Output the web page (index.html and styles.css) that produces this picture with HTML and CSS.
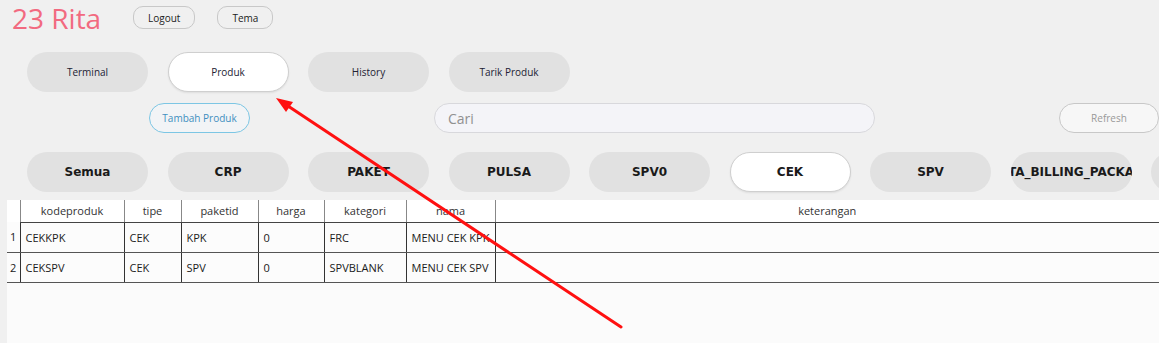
FILE: index.html
```html
<!DOCTYPE html>
<html lang="en">
<head>
    <meta charset="UTF-8">
    <title>23 Rita - Produk</title>
    <link rel="stylesheet" href="styles.css">
</head>
<body>
    <div class="app">
        <div class="topbar">
            <div class="brand">23 Rita</div>
            <button class="small-btn">Logout</button>
            <button class="small-btn">Tema</button>
        </div>

        <div class="tabs">
            <button class="pill">Terminal</button>
            <button class="pill active">Produk</button>
            <button class="pill">History</button>
            <button class="pill">Tarik Produk</button>
        </div>

        <div class="actions">
            <button class="add-btn">Tambah Produk</button>
            <input class="search" type="text" placeholder="Cari">
            <button class="refresh-btn">Refresh</button>
        </div>

        <div class="categories">
            <button class="pill cat">Semua</button>
            <button class="pill cat">CRP</button>
            <button class="pill cat">PAKET</button>
            <button class="pill cat">PULSA</button>
            <button class="pill cat">SPV0</button>
            <button class="pill cat active">CEK</button>
            <button class="pill cat">SPV</button>
            <button class="pill cat">TA_BILLING_PACKA</button>
            <button class="pill cat"></button>
        </div>

        <div class="table-wrap">
            <table class="grid">
                <thead>
                    <tr>
                        <th class="num"></th>
                        <th class="c-kode">kodeproduk</th>
                        <th class="c-tipe">tipe</th>
                        <th class="c-paket">paketid</th>
                        <th class="c-harga">harga</th>
                        <th class="c-kat">kategori</th>
                        <th class="c-nama">nama</th>
                        <th>keterangan</th>
                    </tr>
                </thead>
                <tbody>
                    <tr>
                        <td class="num">1</td>
                        <td>CEKKPK</td>
                        <td>CEK</td>
                        <td>KPK</td>
                        <td>0</td>
                        <td>FRC</td>
                        <td>MENU CEK KPK</td>
                        <td></td>
                    </tr>
                    <tr>
                        <td class="num">2</td>
                        <td>CEKSPV</td>
                        <td>CEK</td>
                        <td>SPV</td>
                        <td>0</td>
                        <td>SPVBLANK</td>
                        <td>MENU CEK SPV</td>
                        <td></td>
                    </tr>
                </tbody>
            </table>
        </div>

        <svg class="annotation" width="1159" height="343" viewBox="0 0 1159 343">
            <line x1="288" y1="106" x2="621" y2="327" stroke="#ff1010" stroke-width="3" stroke-linecap="round"/>
            <polygon points="276,98 286,112 293,102" fill="#ff1010"/>
        </svg>
    </div>
</body>
</html>
```

FILE: styles.css
```css
* {
    margin: 0;
    padding: 0;
    box-sizing: border-box;
}

html, body {
    width: 1159px;
    height: 343px;
    overflow: hidden;
}

body {
    background: #f0f0f0;
    font-family: 'Open Sans', sans-serif;
    color: #222;
}

.app {
    position: relative;
    height: 343px;
    overflow: hidden;
}

button {
    font-family: 'Open Sans', sans-serif;
    cursor: pointer;
}

/* top bar */
.topbar {
    display: flex;
    align-items: center;
    height: 36px;
    padding-left: 12px;
}

.brand {
    font-size: 28px;
    font-weight: 500;
    color: #f26a80;
    line-height: 34px;
    width: 121px;
    white-space: nowrap;
}

.small-btn {
    height: 23px;
    padding: 0 14px;
    margin-top: -1px;
    margin-right: 22px;
    font-size: 10px;
    color: #222;
    background: #f0f0f0;
    border: 1px solid #c8c8c8;
    border-radius: 10px;
}

/* pills */
.tabs, .categories {
    display: flex;
    gap: 19.5px;
    padding-left: 27px;
    white-space: nowrap;
}

.tabs {
    margin-top: 16px;
}

.pill {
    flex: 0 0 121px;
    height: 40px;
    border: none;
    border-radius: 20px;
    background: #e1e1e1;
    font-size: 10px;
    color: #223;
    overflow: hidden;
}

.pill.active {
    background: #fff;
    border: 1px solid #cfcfcf;
    box-shadow: 0 1px 2px rgba(0, 0, 0, 0.08);
}

.pill.cat {
    font-family: 'DejaVu Sans', sans-serif;
    font-weight: bold;
    font-size: 12px;
    color: #1a1a1a;
    display: flex;
    justify-content: center;
    align-items: center;
}

/* actions */
.actions {
    display: flex;
    align-items: center;
    margin-top: 11px;
    height: 30px;
}

.actions > * {
    flex-shrink: 0;
}

.add-btn {
    margin-left: 149px;
    width: 101px;
    height: 30px;
    border: 1px solid #7cc6e4;
    border-radius: 15px;
    background: #f2f4f6;
    color: #3f8fc0;
    font-size: 10px;
}

.search {
    margin-left: 184px;
    width: 441px;
    height: 30px;
    border: 1px solid #d8d8dc;
    border-radius: 15px;
    background: #f4f4f8;
    padding-left: 13px;
    font-family: 'Open Sans', sans-serif;
    font-size: 14px;
    outline: none;
}

.search::placeholder {
    color: #909090;
}

.refresh-btn {
    margin-left: 184px;
    width: 100px;
    height: 30px;
    border: 1px solid #c8c8c8;
    border-radius: 15px;
    background: #f7f7f7;
    color: #999;
    font-size: 10px;
}

.categories {
    margin-top: 19px;
}

/* table */
.table-wrap {
    margin-top: 8px;
    margin-left: 7px;
    background: #fbfbfb;
    height: 143px;
}

.grid {
    width: 100%;
    border-collapse: collapse;
    font-size: 11px;
    table-layout: fixed;
}

.grid th {
    height: 22px;
    font-weight: normal;
    color: #333;
    background: #fff;
    border-left: 1px solid #888;
    border-bottom: 1px solid #444;
}

.grid td {
    height: 30px;
    padding-left: 5px;
    border-left: 1px solid #333;
    border-bottom: 1px solid #555;
    background: #fcfcfc;
    color: #1a1a1a;
    white-space: nowrap;
    overflow: hidden;
}

.grid .num {
    width: 13px;
    border-left: none;
    padding-left: 3px;
    text-align: left;
}

.grid th.num {
    border-bottom: none;
}

.c-kode { width: 104px; }
.c-tipe { width: 57px; }
.c-paket { width: 77px; }
.c-harga { width: 66px; }
.c-kat { width: 82px; }
.c-nama { width: 89px; }

.annotation {
    position: absolute;
    left: 0;
    top: 0;
    pointer-events: none;
}
```
